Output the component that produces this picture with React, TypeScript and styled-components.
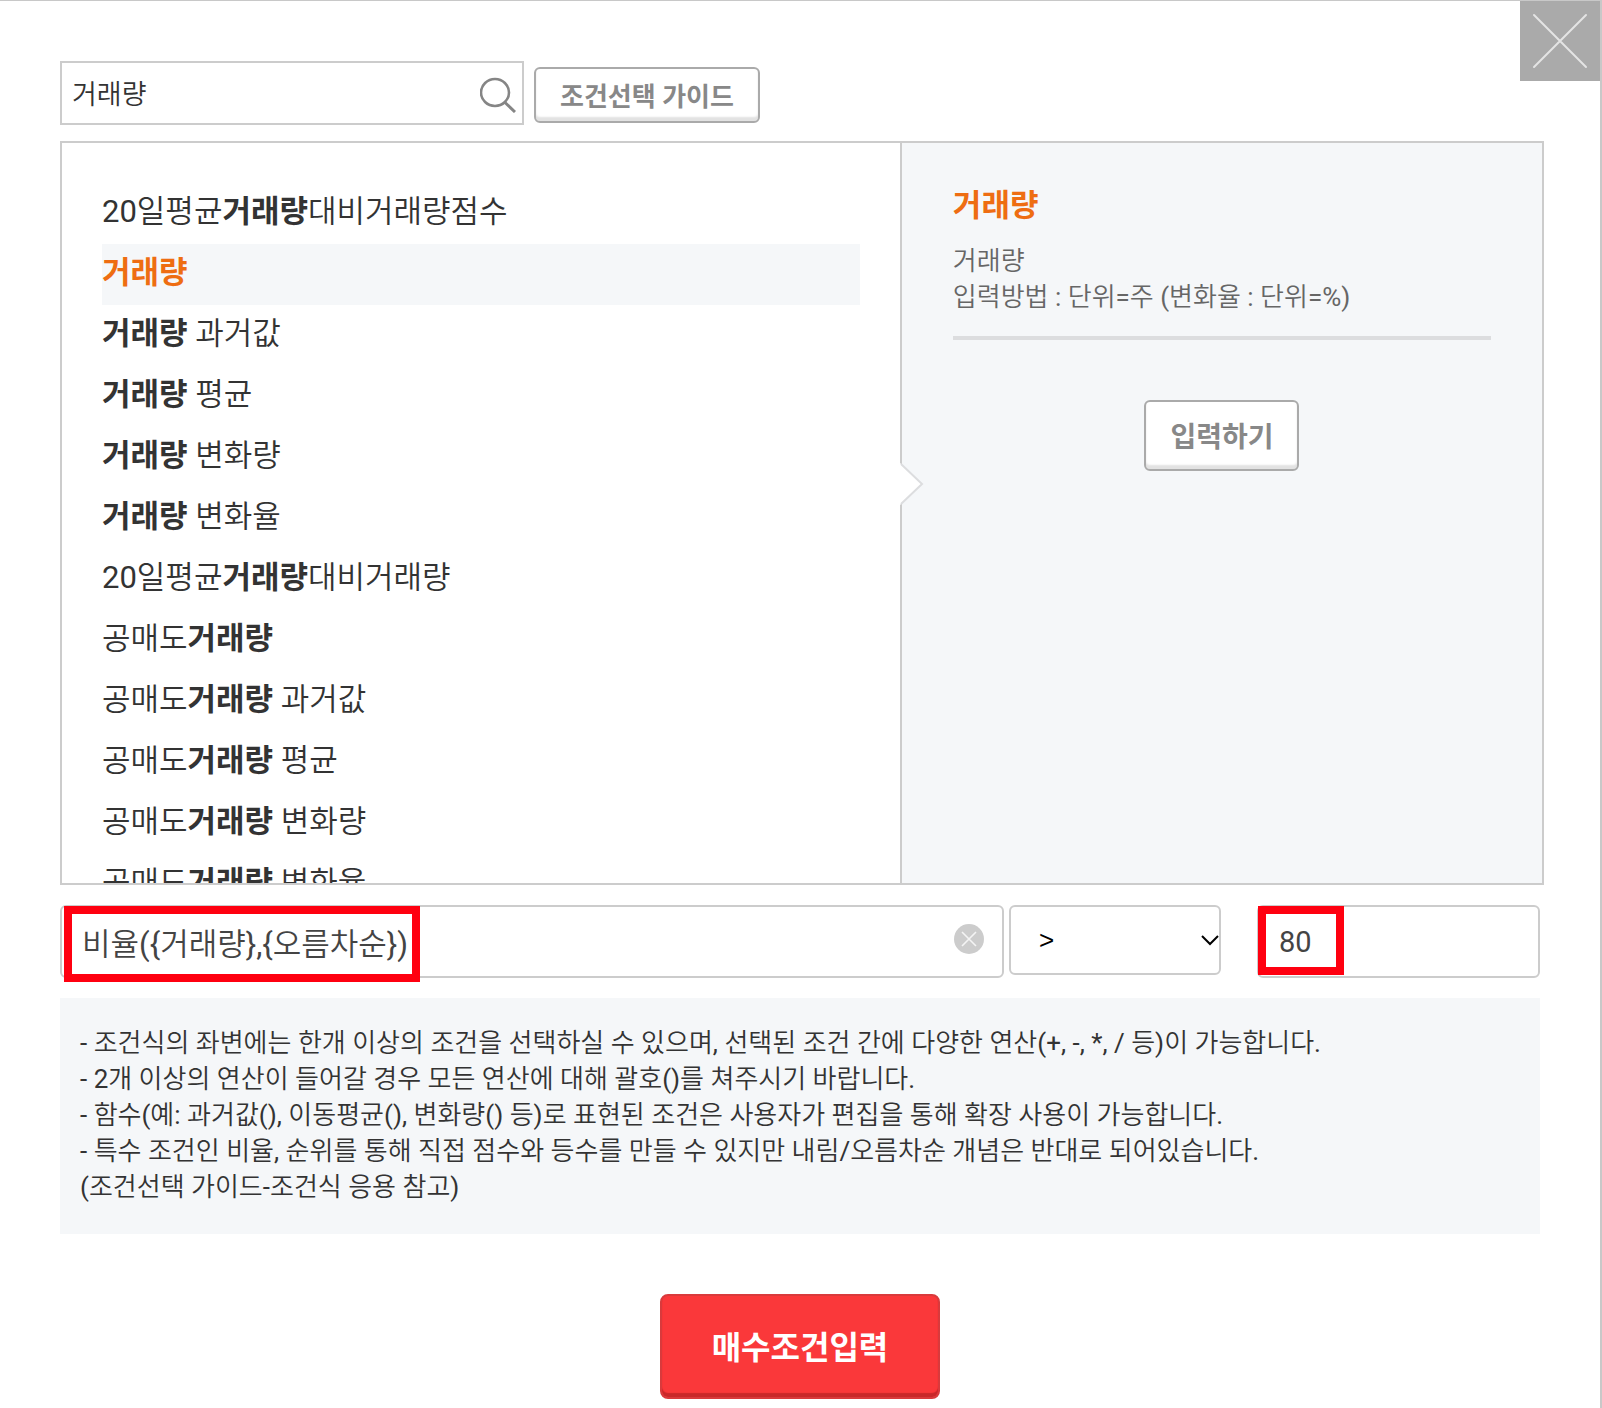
import React, { useState } from "react";
import styled, { createGlobalStyle } from "styled-components";

const GlobalStyle = createGlobalStyle`
  *, *::before, *::after { box-sizing: border-box; }
  body {
    margin: 0;
    background: #fff;
    color: #333;
    font-family: Roboto, "Noto Sans CJK KR DemiLight", "Noto Sans CJK KR", sans-serif;
    font-weight: 400;
  }
  button, input, select { font: inherit; color: inherit; margin: 0; }
  h2, p, ul { margin: 0; padding: 0; }
  h2, b { font-family: Roboto, "Noto Sans CJK KR", sans-serif; font-weight: 700; }
`;

const Dialog = styled.main`
  position: relative;
  min-height: 100vh;
  border-top: 1px solid #c8c8c8;
  border-right: 2px solid #c8c8c8;
  padding: 60px 56px 8px 60px;
`;

const CloseButton = styled.button`
  position: absolute;
  top: 0;
  right: 0;
  display: grid;
  place-items: center;
  width: 80px;
  height: 80px;
  padding: 0;
  border: 0;
  background: #aaa;
  cursor: pointer;
`;

const SearchBar = styled.form`
  display: flex;
  align-items: flex-end;
  gap: 10px;
  margin-bottom: 16px;
`;

const SearchField = styled.div`
  display: flex;
  align-items: center;
  width: 464px;
  height: 64px;
  padding: 4px 6px 0 10px;
  border: 2px solid #ccc;
`;

const SearchInput = styled.input`
  flex: 1;
  min-width: 0;
  height: 56px;
  padding: 0 0 6px;
  border: 0;
  outline: 0;
  background: transparent;
  font-size: 27px;
`;

const IconButton = styled.button`
  display: grid;
  place-items: center;
  flex: none;
  padding: 0;
  border: 0;
  background: transparent;
  cursor: pointer;
`;

const OutlineButton = styled.button<{ $large?: boolean }>`
  height: ${(p) => (p.$large ? 71 : 56)}px;
  margin-bottom: 2px;
  padding: 0 24px 2px;
  border: 2px solid #aaa;
  border-radius: 6px;
  background: #fff;
  box-shadow: inset 0 -4px 2px #e2e2e2;
  color: #888;
  font-family: Roboto, "Noto Sans CJK KR", sans-serif;
  font-size: ${(p) => (p.$large ? 28 : 26)}px;
  font-weight: 700;
  white-space: nowrap;
  cursor: pointer;
`;

const Panel = styled.section`
  display: grid;
  grid-template-columns: 839fr 643fr;
  height: 744px;
  border: 2px solid #ccc;
`;

const ResultList = styled.ul`
  overflow: hidden;
  min-width: 0;
  padding: 40px 40px 0;
  list-style: none;
`;

const ResultButton = styled.button<{ $active: boolean }>`
  display: block;
  width: 100%;
  height: 61px;
  padding: 0 0 3px;
  border: 0;
  background: ${(p) => (p.$active ? "#f5f7f9" : "transparent")};
  color: ${(p) => (p.$active ? "#ee6d12" : "inherit")};
  font-size: 31px;
  line-height: 58px;
  text-align: left;
  white-space: pre;
  cursor: pointer;
`;

const Detail = styled.div`
  position: relative;
  min-width: 0;
  padding: 40px 51px;
  border-left: 2px solid #ccc;
  background: #f5f7f9;
`;

const Pointer = styled.svg`
  position: absolute;
  top: 320px;
  left: -2px;
`;

const DetailTitle = styled.h2`
  color: #ee6d12;
  font-size: 31px;
  line-height: 46px;
`;

const DetailText = styled.p`
  padding: 14px 0 21px;
  border-bottom: 4px solid #dcdddf;
  color: #666;
  font-size: 26px;
  line-height: 36px;
`;

const DetailActions = styled.div`
  display: flex;
  justify-content: center;
  padding-top: 60px;
`;

const Formula = styled.div`
  display: grid;
  grid-template-columns: 944fr 253fr 283fr;
  align-items: start;
  margin: 20px 4px 20px 0;
`;

const Field = styled.div`
  position: relative;
  display: flex;
  align-items: center;
  min-width: 0;
  height: 73px;
  border: 2px solid #ccc;
  border-radius: 6px;
`;

const FieldInput = styled.input<{ $numeric?: boolean }>`
  flex: 1;
  min-width: 0;
  height: 69px;
  padding: 0 20px;
  border: 0;
  outline: 0;
  background: transparent;
  color: #444;
  font-size: ${(p) => (p.$numeric ? 29 : 31)}px;
`;

const ClearButton = styled(IconButton)`
  margin: 0 18px 6px 0;
`;

const Highlight = styled.span<{ $left: number; $width: number; $height: number }>`
  position: absolute;
  top: -1px;
  left: ${(p) => p.$left}px;
  width: ${(p) => p.$width}px;
  height: ${(p) => p.$height}px;
  border: 8px solid #ff0010;
  pointer-events: none;
`;

const SelectBox = styled.div`
  position: relative;
  min-width: 0;
  height: 70px;
  margin: 0 36px 0 5px;

  svg {
    position: absolute;
    top: 29px;
    right: 1px;
    pointer-events: none;
  }
`;

const OperatorSelect = styled.select`
  width: 100%;
  height: 100%;
  padding: 0 28px;
  border: 2px solid #ccc;
  border-radius: 6px;
  outline: 0;
  appearance: none;
  background: #fff;
  color: #000;
  font-family: "Liberation Sans", sans-serif;
  font-size: 26px;
`;

const Notes = styled.section`
  margin-right: 4px;
  padding: 27px 20px 29px;
  background: #f5f7f9;
  font-size: 26px;
  line-height: 36px;
`;

const SubmitRow = styled.div`
  display: flex;
  justify-content: center;
  margin-right: 4px;
  padding-top: 60px;
`;

const SubmitButton = styled.button`
  width: 280px;
  height: 105px;
  padding: 0 0 4px;
  border: 2px solid #d93a3c;
  border-radius: 8px;
  background: #fa383a;
  box-shadow: inset 0 -4px 1px #c9282a;
  color: #fff;
  font-family: Roboto, "Noto Sans CJK KR", sans-serif;
  font-size: 32px;
  font-weight: 700;
  cursor: pointer;
`;

type Part = string | { match: string };
const hit = { match: "거래량" };

const results: Part[][] = [
  ["20일평균", hit, "대비거래량점수"],
  [hit],
  [hit, " 과거값"],
  [hit, " 평균"],
  [hit, " 변화량"],
  [hit, " 변화율"],
  ["20일평균", hit, "대비거래량"],
  ["공매도", hit],
  ["공매도", hit, " 과거값"],
  ["공매도", hit, " 평균"],
  ["공매도", hit, " 변화량"],
  ["공매도", hit, " 변화율"],
];

const notes = [
  "- 조건식의 좌변에는 한개 이상의 조건을 선택하실 수 있으며, 선택된 조건 간에 다양한 연산(+, -, *, / 등)이 가능합니다.",
  "- 2개 이상의 연산이 들어갈 경우 모든 연산에 대해 괄호()를 쳐주시기 바랍니다.",
  "- 함수(예: 과거값(), 이동평균(), 변화량() 등)로 표현된 조건은 사용자가 편집을 통해 확장 사용이 가능합니다.",
  "- 특수 조건인 비율, 순위를 통해 직접 점수와 등수를 만들 수 있지만 내림/오름차순 개념은 반대로 되어있습니다.",
  "(조건선택 가이드-조건식 응용 참고)",
];

export default function App() {
  const [query, setQuery] = useState("거래량");
  const [selected, setSelected] = useState(1);
  const [formula, setFormula] = useState("비율({거래량},{오름차순})");
  const [value, setValue] = useState("80");

  return (
    <>
      <GlobalStyle />
      <Dialog>
        <CloseButton type="button" aria-label="닫기">
          <svg width="56" height="56" viewBox="0 0 56 56" stroke="#e4e4e4" strokeWidth="2" strokeLinecap="round">
            <path d="M2 2 54 54M54 2 2 54" />
          </svg>
        </CloseButton>

        <SearchBar onSubmit={(e) => e.preventDefault()}>
          <SearchField>
            <SearchInput aria-label="조건 검색" value={query} onChange={(e) => setQuery(e.target.value)} />
            <IconButton type="submit" aria-label="검색">
              <svg width="36" height="36" viewBox="0 0 36 36" fill="none" stroke="#858585">
                <ellipse cx="15" cy="15.5" rx="14" ry="13.5" strokeWidth="2.6" />
                <path d="M25 25.5 35 35" strokeWidth="3" />
              </svg>
            </IconButton>
          </SearchField>
          <OutlineButton type="button">조건선택 가이드</OutlineButton>
        </SearchBar>

        <Panel>
          <ResultList>
            {results.map((parts, i) => (
              <li key={i}>
                <ResultButton type="button" $active={i === selected} onClick={() => setSelected(i)}>
                  {parts.map((part, j) =>
                    typeof part === "string" ? <span key={j}>{part}</span> : <b key={j}>{part.match}</b>
                  )}
                </ResultButton>
              </li>
            ))}
          </ResultList>
          <Detail>
            <Pointer width="24" height="42" viewBox="0 0 24 42" aria-hidden="true">
              <path d="M0 0 22 21 0 42Z" fill="#fff" />
              <path d="M1 1 22 21 1 41" fill="none" stroke="#dcdddf" strokeWidth="2" />
            </Pointer>
            <DetailTitle>거래량</DetailTitle>
            <DetailText>
              거래량
              <br />
              입력방법 : 단위=주 (변화율 : 단위=%)
            </DetailText>
            <DetailActions>
              <OutlineButton type="button" $large>입력하기</OutlineButton>
            </DetailActions>
          </Detail>
        </Panel>

        <Formula>
          <Field>
            <FieldInput aria-label="조건식" value={formula} onChange={(e) => setFormula(e.target.value)} />
            <ClearButton type="button" aria-label="지우기" onClick={() => setFormula("")}>
              <svg width="30" height="30" viewBox="0 0 30 30">
                <circle cx="15" cy="15" r="15" fill="#ccc" />
                <path d="M8 8 22 22M22 8 8 22" stroke="#f4f4f4" strokeWidth="1.6" />
              </svg>
            </ClearButton>
            <Highlight $left={2} $width={356} $height={76} />
          </Field>
          <SelectBox>
            <OperatorSelect aria-label="비교 연산자" defaultValue=">">
              <option>&gt;</option>
              <option>&lt;</option>
              <option>=</option>
            </OperatorSelect>
            <svg width="20" height="12" viewBox="0 0 20 12" fill="none" stroke="#000" strokeWidth="2">
              <path d="M2 2 10 10 18 2" />
            </svg>
          </SelectBox>
          <Field>
            <FieldInput $numeric aria-label="비교값" value={value} onChange={(e) => setValue(e.target.value)} />
            <Highlight $left={-1} $width={86} $height={69} />
          </Field>
        </Formula>

        <Notes>
          {notes.map((line) => (
            <p key={line}>{line}</p>
          ))}
        </Notes>

        <SubmitRow>
          <SubmitButton type="button">매수조건입력</SubmitButton>
        </SubmitRow>
      </Dialog>
    </>
  );
}
